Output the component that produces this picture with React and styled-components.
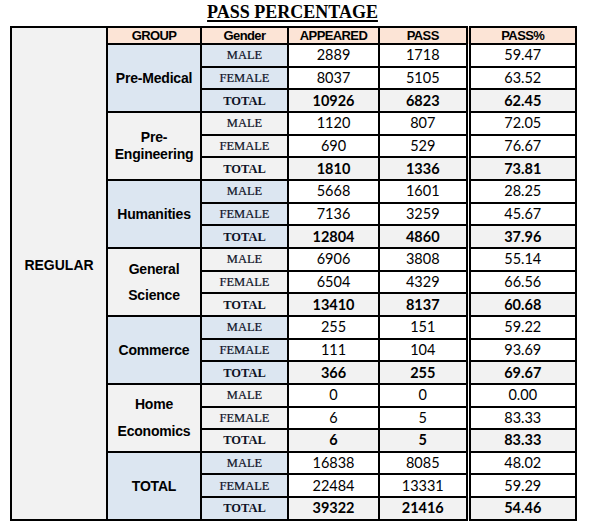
import React from "react";
import styled, { createGlobalStyle } from "styled-components";

const GlobalStyle = createGlobalStyle`
  body {
    margin: 0;
    background: #ffffff;
  }
`;

const groups = [
  {
    name: ["Pre-Medical"],
    tone: "blue",
    rows: [
      ["2889", "1718", "59.47"],
      ["8037", "5105", "63.52"],
      ["10926", "6823", "62.45"],
    ],
  },
  {
    name: ["Pre-", "Engineering"],
    tone: "gray",
    lh: 17,
    rows: [
      ["1120", "807", "72.05"],
      ["690", "529", "76.67"],
      ["1810", "1336", "73.81"],
    ],
  },
  {
    name: ["Humanities"],
    tone: "blue",
    rows: [
      ["5668", "1601", "28.25"],
      ["7136", "3259", "45.67"],
      ["12804", "4860", "37.96"],
    ],
  },
  {
    name: ["General", "Science"],
    tone: "gray",
    lh: 26,
    rows: [
      ["6906", "3808", "55.14"],
      ["6504", "4329", "66.56"],
      ["13410", "8137", "60.68"],
    ],
  },
  {
    name: ["Commerce"],
    tone: "blue",
    rows: [
      ["255", "151", "59.22"],
      ["111", "104", "93.69"],
      ["366", "255", "69.67"],
    ],
  },
  {
    name: ["Home", "Economics"],
    tone: "gray",
    lh: 27,
    rows: [
      ["0", "0", "0.00"],
      ["6", "5", "83.33"],
      ["6", "5", "83.33"],
    ],
  },
  {
    name: ["TOTAL"],
    tone: "blue",
    rows: [
      ["16838", "8085", "48.02"],
      ["22484", "13331", "59.29"],
      ["39322", "21416", "54.46"],
    ],
  },
];

const genders = ["MALE", "FEMALE", "TOTAL"];

const tones = {
  blue: "#dce6f1",
  gray: "#f2f2f2",
};

const App = () => {
  return (
    <>
      <GlobalStyle />
      <Page>
        <Title>PASS PERCENTAGE</Title>
        <Table>
          <colgroup>
            <col style={{ width: 96 }} />
            <col style={{ width: 94 }} />
            <col style={{ width: 87 }} />
            <col style={{ width: 91 }} />
            <col style={{ width: 89 }} />
            <col style={{ width: 108 }} />
          </colgroup>
          <tbody>
            <HeadRow>
              <RegionCell rowSpan={22}>REGULAR</RegionCell>
              <HeadCell>GROUP</HeadCell>
              <HeadCell>Gender</HeadCell>
              <HeadCell>APPEARED</HeadCell>
              <HeadCell>PASS</HeadCell>
              <HeadCell $double>PASS%</HeadCell>
            </HeadRow>
            {groups.map((group) =>
              group.rows.map((row, i) => {
                const total = i === 2;
                return (
                  <BodyRow key={group.name.join("") + i}>
                    {i === 0 && (
                      <GroupCell rowSpan={3} $tone={group.tone} $lh={group.lh || 18}>
                        {group.name.map((part, k) => (
                          <React.Fragment key={part}>
                            {k > 0 && <br />}
                            {part}
                          </React.Fragment>
                        ))}
                      </GroupCell>
                    )}
                    <GenderCell $tone={group.tone} $total={total}>
                      {genders[i]}
                    </GenderCell>
                    <NumCell $total={total}>{row[0]}</NumCell>
                    <NumCell $total={total}>{row[1]}</NumCell>
                    <NumCell $total={total} $double>
                      {row[2]}
                    </NumCell>
                  </BodyRow>
                );
              })
            )}
          </tbody>
        </Table>
      </Page>
    </>
  );
};

const Page = styled.div`
  width: 565px;
  padding-left: 10px;
`;

const Title = styled.h1`
  margin: 0;
  height: 26px;
  font-family: "Liberation Serif", "DejaVu Serif", serif;
  font-size: 18px;
  font-weight: 700;
  line-height: 24px;
  text-align: center;
  text-decoration: underline;
  text-decoration-thickness: 2px;
  text-underline-offset: 2px;
  color: #000;
`;

const Table = styled.table`
  width: 565px;
  table-layout: fixed;
  border-collapse: collapse;
  border: 2px solid #000;

  td,
  th {
    border: 2px solid #000;
    padding: 0;
    text-align: center;
    vertical-align: middle;
  }
`;

const HeadRow = styled.tr`
  height: 17px;
`;

const BodyRow = styled.tr`
  height: 22.67px;
`;

const RegionCell = styled.td`
  background: #f2f2f2;
  font-family: "Liberation Sans", Arial, sans-serif;
  font-size: 14px;
  font-weight: 700;
  color: #000;
  padding-bottom: 16px !important;
`;

const HeadCell = styled.th`
  background: #fce4d6;
  font-family: "Liberation Sans", Arial, sans-serif;
  font-size: 13px;
  font-weight: 700;
  letter-spacing: -0.6px;
  line-height: 14px;
  color: #000;
  border-left: ${(p) => (p.$double ? "5px double #000" : "2px solid #000")} !important;
`;

const GroupCell = styled.td`
  background: ${(p) => tones[p.$tone]};
  font-family: "Liberation Sans", Arial, sans-serif;
  font-size: 14px;
  font-weight: 700;
  letter-spacing: -0.2px;
  line-height: ${(p) => p.$lh}px;
  color: #000;
`;

const GenderCell = styled.td`
  background: ${(p) => tones[p.$tone]};
  font-family: "Liberation Serif", "DejaVu Serif", serif;
  font-size: 12.5px;
  font-weight: ${(p) => (p.$total ? 700 : 400)};
  line-height: 14px;
  color: #0d1226;
  -webkit-text-stroke: ${(p) => (p.$total ? "0" : "0.2px #0d1226")};
`;

const NumCell = styled.td`
  background: ${(p) => (p.$total ? "#f2f2f2" : "#ffffff")};
  font-family: Lato, "Open Sans", sans-serif;
  font-size: 14.5px;
  font-weight: ${(p) => (p.$total ? 700 : 400)};
  line-height: 16px;
  color: #000;
  border-left: ${(p) => (p.$double ? "5px double #000" : "2px solid #000")} !important;
`;

export default App;
